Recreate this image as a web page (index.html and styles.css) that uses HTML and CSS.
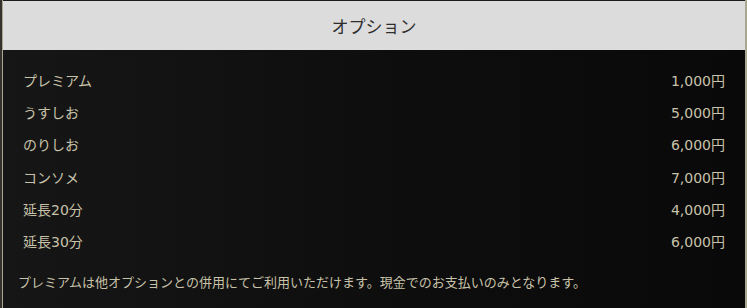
FILE: index.html
```html
<!DOCTYPE html>
<html lang="ja">
<head>
<meta charset="utf-8">
<title>オプション</title>
<link rel="stylesheet" href="styles.css">
</head>
<body>
<section class="panel">
  <h2 class="panel-title">オプション</h2>
  <div class="panel-body">
    <ul class="option-list">
      <li class="option-row"><span class="option-name">プレミアム</span><span class="option-price">1,000円</span></li>
      <li class="option-row"><span class="option-name">うすしお</span><span class="option-price">5,000円</span></li>
      <li class="option-row"><span class="option-name">のりしお</span><span class="option-price">6,000円</span></li>
      <li class="option-row"><span class="option-name">コンソメ</span><span class="option-price">7,000円</span></li>
      <li class="option-row"><span class="option-name">延長20分</span><span class="option-price">4,000円</span></li>
      <li class="option-row"><span class="option-name">延長30分</span><span class="option-price">6,000円</span></li>
    </ul>
    <p class="option-note">プレミアムは他オプションとの併用にてご利用いただけます。現金でのお支払いのみとなります。</p>
  </div>
</section>
</body>
</html>
```
FILE: styles.css
```css
html, body {
  margin: 0;
  padding: 0;
  height: 100%;
}
body {
  background: linear-gradient(to right, #34322f 0, #34322f 2px, #aaa690 2px, #aaa690 100%);
  font-family: "Noto Sans CJK JP", "Noto Sans", sans-serif;
  overflow: hidden;
}
.panel {
  margin: 0 2px 0 3px;
  border-top: 1px solid #1c1c1c;
  min-height: 100vh;
  box-sizing: border-box;
  display: flex;
  flex-direction: column;
}
.panel-title {
  margin: 0;
  height: 49px;
  background: #dcdcdc;
  color: #2e2e2e;
  font-size: 17px;
  font-weight: 400;
  display: flex;
  align-items: center;
  justify-content: center;
}
.panel-body {
  flex: 1;
  background: linear-gradient(to right, #161616 0%, #0e0e0e 50%, #090909 100%);
  padding: 14px 20px 0 20px;
}
.option-list {
  list-style: none;
  margin: 0;
  padding: 0;
}
.option-row {
  display: flex;
  justify-content: space-between;
  align-items: center;
  height: 32.2px;
  font-family: "DejaVu Sans", "Noto Sans CJK JP", sans-serif;
  font-size: 14px;
  color: #c8c2a9;
}
.option-note {
  margin: 15px 0 0 -5px;
  font-size: 13px;
  line-height: 20px;
  color: #c8c2a9;
}
```
